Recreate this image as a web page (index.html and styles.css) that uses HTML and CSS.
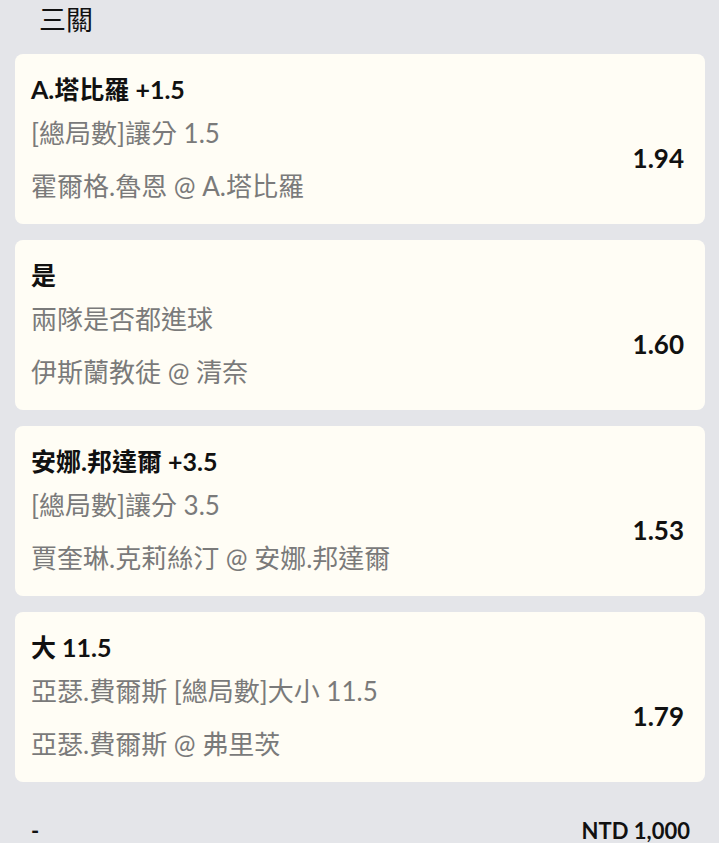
FILE: index.html
```html
<!DOCTYPE html>
<html lang="zh-Hant">
<head>
  <meta charset="UTF-8" />
  <meta name="viewport" content="width=device-width, initial-scale=1.0" />
  <title>三關</title>
  <link rel="stylesheet" href="styles.css">
</head>
<body>
  <h1 class="slip-title">三關</h1>

  <div class="bet-list">
    <div class="bet">
      <div class="bet-pick">A.塔比羅 +1.5</div>
      <div class="bet-row">
        <div class="bet-info">
          <div class="bet-market">[總局數]讓分 1.5</div>
          <div class="bet-match">霍爾格.魯恩 @ A.塔比羅</div>
        </div>
        <div class="bet-odds">1.94</div>
      </div>
    </div>

    <div class="bet">
      <div class="bet-pick">是</div>
      <div class="bet-row">
        <div class="bet-info">
          <div class="bet-market">兩隊是否都進球</div>
          <div class="bet-match">伊斯蘭教徒 @ 清奈</div>
        </div>
        <div class="bet-odds">1.60</div>
      </div>
    </div>

    <div class="bet">
      <div class="bet-pick">安娜.邦達爾 +3.5</div>
      <div class="bet-row">
        <div class="bet-info">
          <div class="bet-market">[總局數]讓分 3.5</div>
          <div class="bet-match">賈奎琳.克莉絲汀 @ 安娜.邦達爾</div>
        </div>
        <div class="bet-odds">1.53</div>
      </div>
    </div>

    <div class="bet">
      <div class="bet-pick">大 11.5</div>
      <div class="bet-row">
        <div class="bet-info">
          <div class="bet-market">亞瑟.費爾斯 [總局數]大小 11.5</div>
          <div class="bet-match">亞瑟.費爾斯 @ 弗里茨</div>
        </div>
        <div class="bet-odds">1.79</div>
      </div>
    </div>
  </div>

  <div class="slip-total">
    <span>-</span>
    <span>NTD 1,000</span>
  </div>
</body>
</html>
```

FILE: styles.css
```css
html, body {
  margin: 0;
  padding: 0;
}
body {
  background: #e4e5e9;
  font-family: Lato, "Noto Sans CJK TC", sans-serif;
  color: #111;
}
.slip-title {
  margin: 0;
  padding: 0 0 0 39px;
  height: 40px;
  line-height: 40px;
  font-size: 27px;
  font-weight: 400;
}
.bet-list {
  display: flex;
  flex-direction: column;
  gap: 16px;
  padding: 14px 14px 0 15px;
}
.bet {
  background: #fffdf5;
  border-radius: 8px;
  padding: 17px 21px 20px 16px;
}
.bet-pick {
  font-size: 25px;
  font-weight: bold;
  line-height: 36px;
}
.bet-row {
  display: flex;
  align-items: center;
  justify-content: space-between;
  margin-top: 8px;
}
.bet-info {
  color: #7a7a7a;
  font-size: 26px;
  line-height: 36px;
}
.bet-match { margin-top: 17px; }
.bet-odds {
  font-size: 26px;
  font-weight: bold;
  margin-top: -3px;
}
.slip-total {
  display: flex;
  justify-content: space-between;
  padding: 34px 29px 0 31px;
  font-size: 22px;
  font-weight: bold;
  line-height: 30px;
}
```
